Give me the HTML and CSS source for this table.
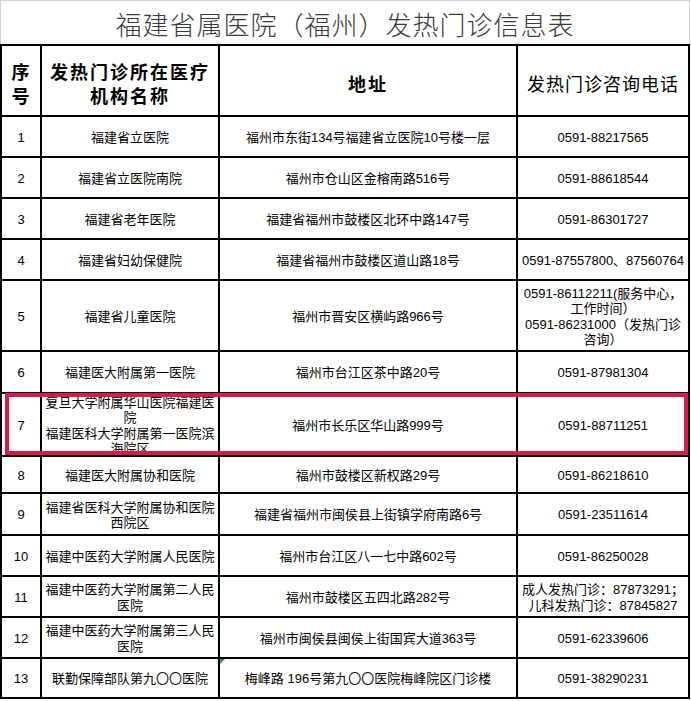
FILE: index.html
```html
<!DOCTYPE html>
<html lang="zh-CN">
<head>
<meta charset="utf-8">
<title>福建省属医院（福州）发热门诊信息表</title>
<link rel="stylesheet" href="styles.css">
</head>
<body>
<div class="sheet">
  <div class="title">福建省属医院（福州）发热门诊信息表</div>
  <div class="grid">
    <div class="cell hd bold">序<br>号</div>
    <div class="cell hd bold wide">发热门诊所在医疗<br>机构名称</div>
    <div class="cell hd bold wide">地址</div>
    <div class="cell hd">发热门诊咨询电话</div>

    <div class="cell">1</div>
    <div class="cell">福建省立医院</div>
    <div class="cell">福州市东街134号福建省立医院10号楼一层</div>
    <div class="cell">0591-88217565</div>

    <div class="cell">2</div>
    <div class="cell">福建省立医院南院</div>
    <div class="cell">福州市仓山区金榕南路516号</div>
    <div class="cell">0591-88618544</div>

    <div class="cell">3</div>
    <div class="cell">福建省老年医院</div>
    <div class="cell">福建省福州市鼓楼区北环中路147号</div>
    <div class="cell">0591-86301727</div>

    <div class="cell">4</div>
    <div class="cell">福建省妇幼保健院</div>
    <div class="cell">福建省福州市鼓楼区道山路18号</div>
    <div class="cell">0591-87557800、87560764</div>

    <div class="cell">5</div>
    <div class="cell">福建省儿童医院</div>
    <div class="cell">福州市晋安区横屿路966号</div>
    <div class="cell">0591-86112211(服务中心，<br>工作时间）<br>0591-86231000（发热门诊<br>咨询）</div>

    <div class="cell">6</div>
    <div class="cell">福建医大附属第一医院</div>
    <div class="cell">福州市台江区茶中路20号</div>
    <div class="cell">0591-87981304</div>

    <div class="cell">7</div>
    <div class="cell">复旦大学附属华山医院福建医<br>院<br>福建医科大学附属第一医院滨<br>海院区</div>
    <div class="cell">福州市长乐区华山路999号</div>
    <div class="cell">0591-88711251</div>

    <div class="cell">8</div>
    <div class="cell">福建医大附属协和医院</div>
    <div class="cell">福州市鼓楼区新权路29号</div>
    <div class="cell">0591-86218610</div>

    <div class="cell">9</div>
    <div class="cell">福建省医科大学附属协和医院<br>西院区</div>
    <div class="cell">福建省福州市闽侯县上街镇学府南路6号</div>
    <div class="cell">0591-23511614</div>

    <div class="cell">10</div>
    <div class="cell">福建中医药大学附属人民医院</div>
    <div class="cell">福州市台江区八一七中路602号</div>
    <div class="cell">0591-86250028</div>

    <div class="cell">11</div>
    <div class="cell">福建中医药大学附属第二人民<br>医院</div>
    <div class="cell">福州市鼓楼区五四北路282号</div>
    <div class="cell">成人发热门诊：87873291；<br>儿科发热门诊：87845827</div>

    <div class="cell">12</div>
    <div class="cell">福建中医药大学附属第三人民<br>医院</div>
    <div class="cell">福州市闽侯县闽侯上街国宾大道363号</div>
    <div class="cell">0591-62339606</div>

    <div class="cell">13</div>
    <div class="cell">联勤保障部队第九〇〇医院</div>
    <div class="cell flag">梅峰路 196号第九〇〇医院梅峰院区门诊楼</div>
    <div class="cell">0591-38290231</div>
  </div>
  <div class="highlight"></div>
</div>
</body>
</html>
```

FILE: styles.css
```css
html, body {
  margin: 0;
  padding: 0;
  background: #ffffff;
}

body {
  font-family: "Liberation Sans", "Noto Sans CJK SC", sans-serif;
  color: #000;
}

.sheet {
  position: relative;
  width: 690px;
}

.title {
  box-sizing: border-box;
  height: 44px;
  border: 1px solid #c9d1e3;
  border-bottom: none;
  padding-top: 5px;
  text-align: center;
  font-family: "Noto Sans CJK SC", sans-serif;
  font-size: 26px;
  font-weight: 300;
  letter-spacing: 1px;
  line-height: 36px;
  color: #3a3a3a;
}

.grid {
  display: grid;
  grid-template-columns: 40px 178px 298px 172px;
  grid-template-rows: 71px 41px 41px 41px 41px 71px 42px 63px 37px 42px 41px 41px 41px 40px;
  border-top: 2px solid #000;
  border-left: 2px solid #000;
}

.cell {
  box-sizing: border-box;
  border-right: 2px solid #000;
  border-bottom: 2px solid #000;
  display: flex;
  align-items: center;
  justify-content: center;
  text-align: center;
  font-size: 13px;
  line-height: 15.5px;
  white-space: nowrap;
  padding-top: 2px;
  position: relative;
}

.hd {
  font-family: "Noto Sans CJK SC", sans-serif;
  font-size: 18px;
  line-height: 24px;
  letter-spacing: 1px;
  padding-top: 4px;
}

.bold {
  font-weight: 700;
}

.wide {
  letter-spacing: 2px;
}

.flag::before {
  content: "";
  position: absolute;
  left: 0;
  top: 0;
  border-top: 5px solid #2a9a3c;
  border-right: 5px solid transparent;
}

.highlight {
  position: absolute;
  left: 5px;
  top: 393px;
  width: 683px;
  height: 62px;
  box-sizing: border-box;
  border: 4px solid #d81b4b;
  pointer-events: none;
}
```
